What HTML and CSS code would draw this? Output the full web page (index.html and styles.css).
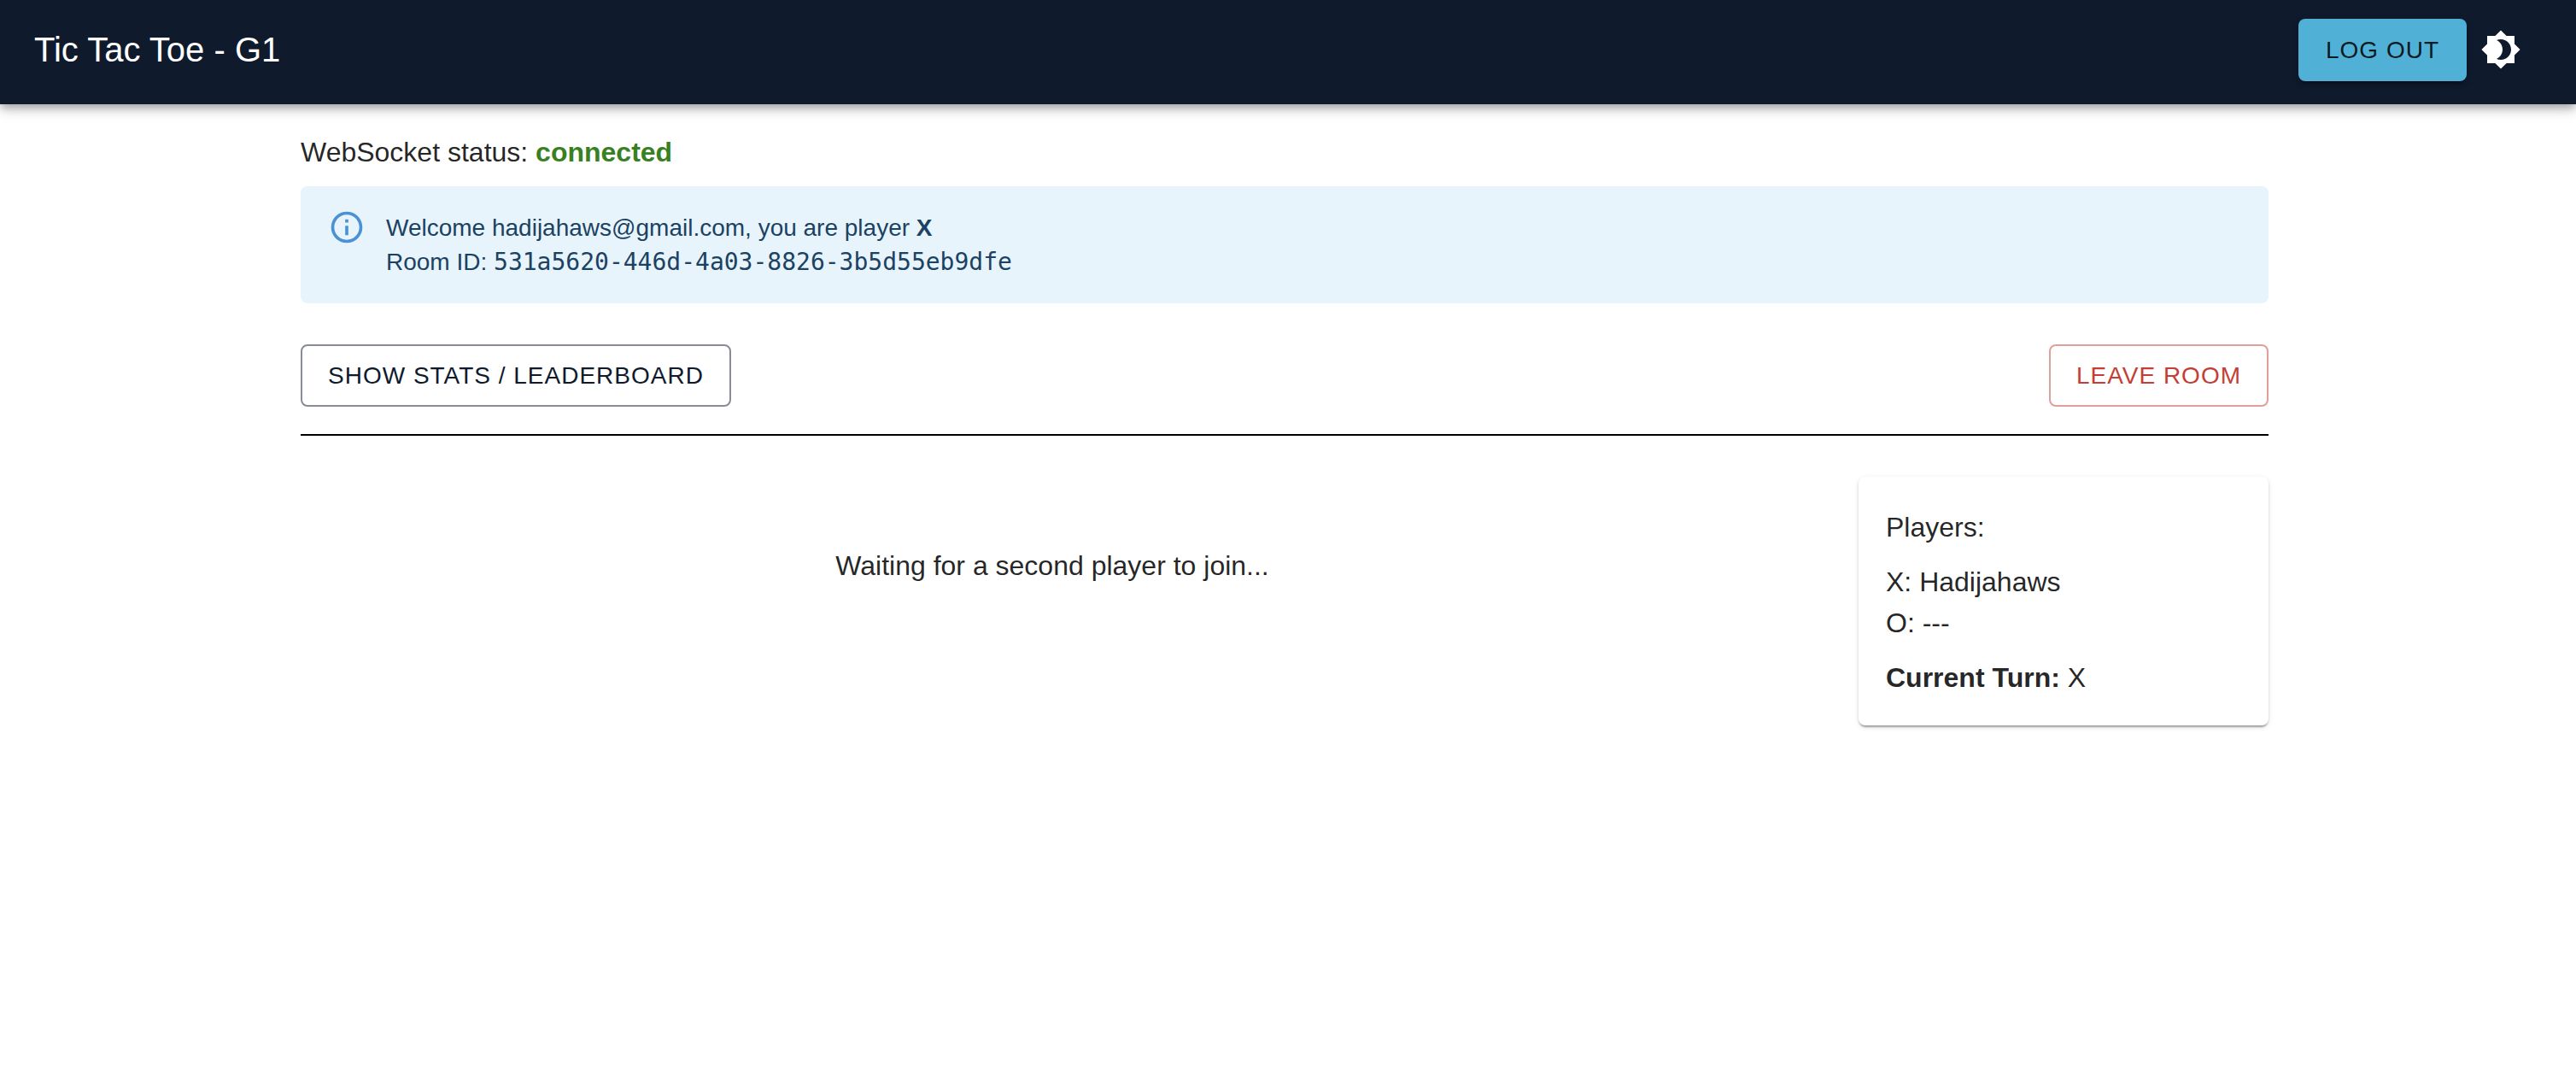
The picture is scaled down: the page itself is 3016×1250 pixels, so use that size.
FILE: index.html
```html
<!DOCTYPE html>
<html lang="en">
<head>
  <meta charset="utf-8">
  <meta name="viewport" content="width=device-width, initial-scale=1">
  <title>Tic Tac Toe - G1</title>
  <link rel="stylesheet" href="styles.css">
</head>
<body>
  <header class="app-bar">
    <h1 class="app-title">Tic Tac Toe - G1</h1>
    <button type="button" class="button button-contained">Log out</button>
    <button type="button" class="icon-button" aria-label="Toggle theme">
      <svg class="icon" viewBox="0 0 24 24" aria-hidden="true"><path d="M20 8.69V4h-4.69L12 .69 8.69 4H4v4.69L.69 12 4 15.31V20h4.69L12 23.31 15.31 20H20v-4.69L23.31 12 20 8.69zM12 18c-.89 0-1.74-.2-2.5-.55C11.56 16.5 13 14.42 13 12s-1.44-4.5-3.5-5.45C10.26 6.2 11.11 6 12 6c3.31 0 6 2.69 6 6s-2.69 6-6 6z"/></svg>
    </button>
  </header>

  <div class="page">
    <main class="container">
      <p class="status">WebSocket status: <strong class="status-value">connected</strong></p>

      <div class="alert" role="status">
        <svg class="alert-icon" viewBox="0 0 24 24" aria-hidden="true"><path d="M11,7H13V9H11V7M11,11H13V17H11V11M12,20C7.59,20 4,16.41 4,12C4,7.59 7.59,4 12,4C16.41,4 20,7.59 20,12C20,16.41 16.41,20 12,20M12,2A10,10 0 0,0 2,12A10,10 0 0,0 12,22A10,10 0 0,0 22,12A10,10 0 0,0 12,2Z"/></svg>
        <div class="alert-message">
          <p>Welcome hadijahaws@gmail.com, you are player <strong>X</strong></p>
          <p>Room ID: <code class="room-id">531a5620-446d-4a03-8826-3b5d55eb9dfe</code></p>
        </div>
      </div>

      <div class="actions">
        <button type="button" class="button button-outlined">Show Stats / Leaderboard</button>
        <button type="button" class="button button-outlined button-error">Leave Room</button>
      </div>

      <hr class="divider">

      <div class="game">
        <section class="board">
          <p>Waiting for a second player to join...</p>
        </section>
        <aside class="players">
          <p>Players:</p>
          <div>
            <p>X: Hadijahaws</p>
            <p>O: ---</p>
          </div>
          <p><strong>Current Turn:</strong> X</p>
        </aside>
      </div>
    </main>
  </div>
</body>
</html>
```
FILE: styles.css
```css
* {
  box-sizing: border-box;
}

body {
  margin: 0;
  background: #fff;
  color: rgba(0, 0, 0, 0.87);
  font-family: Helvetica, "Liberation Sans", Arial, sans-serif;
  font-size: 32px;
  line-height: 48px;
}

p {
  margin: 0;
}

.app-bar {
  display: flex;
  align-items: center;
  padding: 18px 48px 24px 40px;
  background: #0f1a2d;
  color: #fff;
  box-shadow: 0 4px 8px -2px rgba(0, 0, 0, 0.2), 0 8px 10px rgba(0, 0, 0, 0.14), 0 2px 20px rgba(0, 0, 0, 0.12);
}

.app-title {
  flex: 1;
  margin: 0;
  font-size: 40px;
  font-weight: 400;
  line-height: 64px;
}

.button {
  padding: 12px 32px;
  border: 0;
  border-radius: 8px;
  background: transparent;
  font-family: inherit;
  font-size: 28px;
  line-height: 49px;
  letter-spacing: 1px;
  text-transform: uppercase;
  cursor: pointer;
}

.button-contained {
  background: #50b0d6;
  color: rgba(0, 0, 0, 0.87);
  box-shadow: 0 6px 2px -4px rgba(0, 0, 0, 0.2), 0 4px 4px rgba(0, 0, 0, 0.14), 0 2px 10px rgba(0, 0, 0, 0.12);
}

.button-outlined {
  padding: 10px 30px;
  border: 2px solid rgba(15, 26, 45, 0.5);
  color: #0f1a2d;
}

.button-error {
  border-color: rgba(196, 62, 54, 0.5);
  color: #c43e36;
}

.icon-button {
  display: flex;
  padding: 16px;
  border: 0;
  background: transparent;
  color: inherit;
  cursor: pointer;
}

.icon {
  width: 48px;
  height: 48px;
  fill: currentColor;
}

.page {
  padding-right: 8px;
}

.container {
  max-width: 2400px;
  margin: 0 auto;
  padding: 32px 48px;
}

.status-value {
  color: #388022;
}

.alert {
  display: flex;
  gap: 24px;
  margin: 16px 0 48px;
  padding: 12px 32px;
  border-radius: 8px;
  background: #e8f4fc;
  color: #1b4262;
  font-size: 28px;
  line-height: 40px;
}

.alert-icon {
  width: 44px;
  height: 44px;
  margin: 14px 0;
  fill: #4a92d4;
}

.alert-message {
  padding: 17px 0 16px;
}

.room-id {
  font-family: Menlo, "DejaVu Sans Mono", monospace;
  font-size: 28px;
}

.actions {
  display: flex;
  justify-content: space-between;
}

.divider {
  height: 2px;
  margin: 32px 0 48px;
  border: 0;
  background: #000;
}

.game {
  display: flex;
  align-items: flex-start;
  gap: 64px;
}

.board {
  flex: 1;
  padding-top: 80px;
  text-align: center;
}

.players {
  display: flex;
  flex-direction: column;
  gap: 16px;
  width: 480px;
  padding: 35px 32px 32px;
  border-radius: 8px;
  background: #fff;
  box-shadow: 0 4px 2px -2px rgba(0, 0, 0, 0.2), 0 2px 2px rgba(0, 0, 0, 0.14), 0 2px 6px rgba(0, 0, 0, 0.12);
}
```
